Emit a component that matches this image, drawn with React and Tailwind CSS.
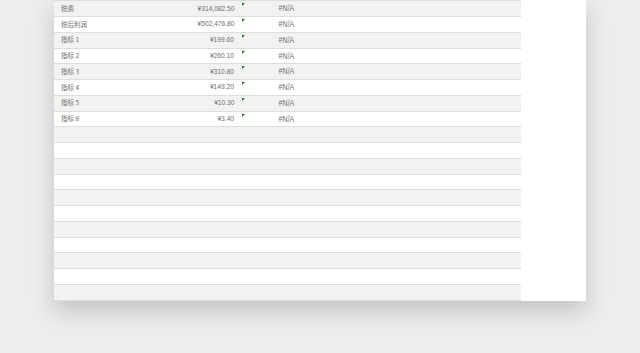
import React from "react";

const rows = [
  { label: "税费", amount: "¥314,082.50" },
  { label: "税后利润", amount: "¥502,476.80" },
  { label: "指标 1", amount: "¥199.60" },
  { label: "指标 2", amount: "¥260.10" },
  { label: "指标 3", amount: "¥310.80" },
  { label: "指标 4", amount: "¥149.20" },
  { label: "指标 5", amount: "¥10.30" },
  { label: "指标 6", amount: "¥3.40" },
];

const EMPTY_ROWS = 11;

function Row({ index, item }) {
  const shade = index % 2 === 0 ? "bg-[#f2f2f2]" : "bg-white";
  return (
    <div
      className={`${shade} flex h-[15.75px] items-center border-b border-[#dddddd] text-[#6e6e6e]`}
    >
      {item && (
        <>
          <div className="w-[96px] pl-[7px] text-[6.5px] font-['Noto_Sans_CJK_SC',sans-serif]">
            {item.label}
          </div>
          <div className="w-[84px] text-right font-['Liberation_Sans',sans-serif] text-[8px]">
            <span className="inline-block origin-right scale-x-[0.83]">{item.amount}</span>
          </div>
          <div className="w-[8px]" />
          <div className="relative h-full w-[89px]">
            <div className="absolute left-0 top-[2px] h-0 w-0 border-t-[3px] border-r-[3px] border-t-[#1f7a1f] border-r-transparent" />
            <div className="flex h-full items-center justify-center font-['Liberation_Sans',sans-serif] text-[8.5px]">
              <span className="inline-block scale-x-[0.83]">#N/A</span>
            </div>
          </div>
        </>
      )}
    </div>
  );
}

export default function App() {
  return (
    <div className="h-[353px] w-[640px] overflow-hidden bg-[#ededed]">
      <div className="ml-[54px] h-[301px] w-[532px] overflow-hidden bg-white shadow-[0_10px_22px_rgba(0,0,0,0.18)]">
        <div className="-mt-[14.5px] w-[467px]">
          <div className="h-[15.75px] border-b border-[#dddddd] bg-white" />
          {rows.map((item, i) => (
            <Row key={i} index={i} item={item} />
          ))}
          {Array.from({ length: EMPTY_ROWS }).map((_, i) => (
            <Row key={`e${i}`} index={rows.length + i} />
          ))}
        </div>
      </div>
    </div>
  );
}
